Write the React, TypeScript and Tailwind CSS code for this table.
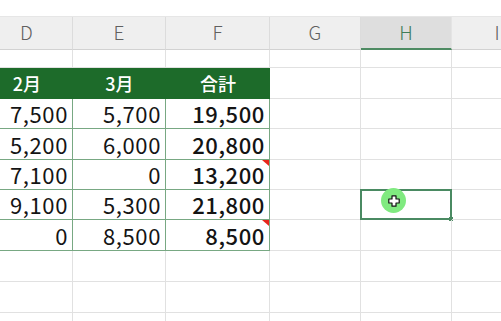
import React from 'react'

const cols = [
    { key: 'D', w: 'w-[92px]' },
    { key: 'E', w: 'w-[93px]' },
    { key: 'F', w: 'w-[104px]' },
    { key: 'G', w: 'w-[91px]' },
    { key: 'H', w: 'w-[91px]' },
    { key: 'I', w: 'w-[91px]' },
]

type Row = { d: string, e: string, f: string, flag?: boolean, h: string }

const rows: Row[] = [
    { d: '7,500', e: '5,700', f: '19,500', h: 'h-[30px]' },
    { d: '5,200', e: '6,000', f: '20,800', h: 'h-[31px]' },
    { d: '7,100', e: '0', f: '13,200', flag: true, h: 'h-[30px]' },
    { d: '9,100', e: '5,300', f: '21,800', h: 'h-[30px]' },
    { d: '0', e: '8,500', f: '8,500', flag: true, h: 'h-[31px]' },
]

const Flag = () => (
    <div className="absolute top-0 right-0 w-0 h-0 border-l-[7px] border-l-transparent border-t-[6px] border-t-[#e8261c]" />
)

const Selection = () => (
    <>
        <div className="absolute -top-px -left-px -right-px -bottom-px border-2 border-[#4a8a62]" />
        <div className="absolute -right-[2px] -bottom-[2px] w-[4px] h-[4px] bg-[#4a8a62]" />
        <div className="absolute left-[20px] top-[-2px] w-[25px] h-[25px] rounded-full bg-[#80ea80] flex items-center justify-center">
            <svg width="12" height="12" viewBox="0 0 12 12">
                <path d="M4 0.8h4v3.2h3.2v4H8v3.2H4V8H0.8V4H4z" fill="#fff" stroke="#111" strokeWidth="1.2" strokeLinejoin="round" />
            </svg>
        </div>
    </>
)

const EmptyCells = ({ from, sel }: { from: number, sel?: boolean }) => (
    <>
        {cols.slice(from).map(c => (
            <div key={c.key} className={`${c.w} h-full shrink-0 border-r border-b border-[#e1e1e1] relative`}>
                {sel && c.key === 'H' && <Selection />}
            </div>
        ))}
    </>
)

export default function App() {
    return (
        <div className="w-[501px] h-[321px] overflow-hidden bg-white relative" style={{ fontFamily: '"Noto Sans CJK JP", "Noto Sans", sans-serif' }}>
            <div className="h-[17px] border-b border-[#e6e6e6]" />
            <div className="ml-[-19px] flex flex-col w-[600px]">
                {/* column header */}
                <div className="flex h-[33px] bg-[#efefef]">
                    {cols.map(c => (
                        <div key={c.key}
                            className={`${c.w} shrink-0 flex items-center justify-center border-r text-[19px] ${c.key === 'H'
                                ? 'bg-[#dedede] border-[#e4e4e4] border-b-2 border-b-[#4e8b63] text-[#3f7d57]'
                                : 'border-[#dcdcdc] border-b border-b-[#d2d2d2] text-[#606060]'}`}>
                            <span className="-mt-[1px] font-light">{c.key}</span>
                        </div>
                    ))}
                </div>
                {/* row 1 */}
                <div className="flex h-[18px]"><EmptyCells from={0} /></div>
                {/* table header */}
                <div className="flex h-[31px]">
                    {['2月', '3月', '合計'].map((t, i) => (
                        <div key={t} className={`${cols[i].w} h-full shrink-0 bg-[#1d6b2a] flex items-center justify-center text-white font-medium text-[18px]`}>
                            {t}
                        </div>
                    ))}
                    <EmptyCells from={3} />
                </div>
                {/* data */}
                {rows.map((r, i) => (
                    <div key={i} className={`flex ${r.h}`}>
                        {[r.d, r.e, r.f].map((v, j) => (
                            <div key={j} className={`${cols[j].w} h-full shrink-0 border-r border-b border-[#78a883] relative flex items-center justify-end pr-[4px] text-[22px] tracking-[0.6px] text-[#141414] ${j === 2 ? 'font-medium' : 'font-normal'}`}>
                                {v}
                                {j === 2 && r.flag && <Flag />}
                            </div>
                        ))}
                        <EmptyCells from={3} sel={i === 3} />
                    </div>
                ))}
                {/* empty rows */}
                {[0, 1, 2].map(i => (
                    <div key={i} className="flex h-[31px]"><EmptyCells from={0} /></div>
                ))}
            </div>
        </div>
    )
}
